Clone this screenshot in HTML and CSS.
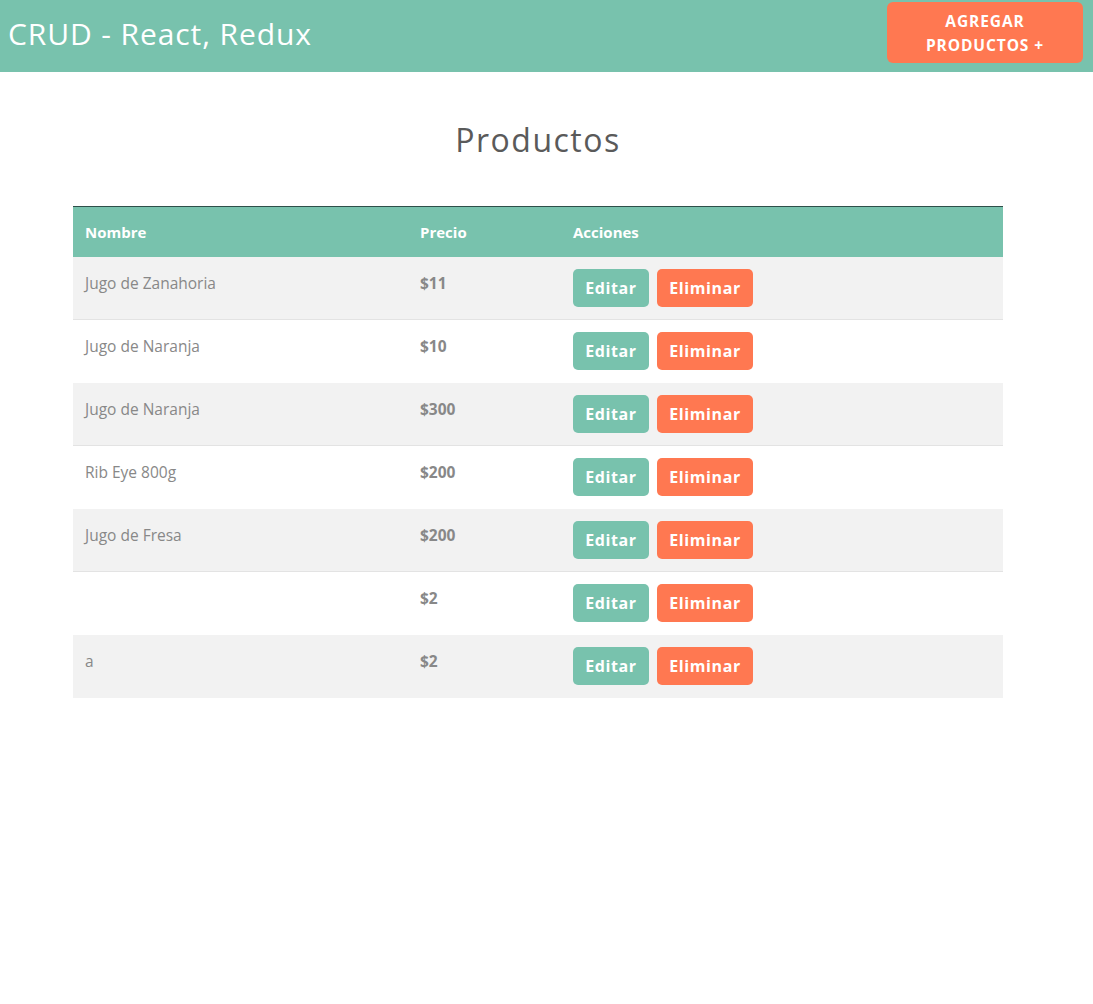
FILE: index.html
```html
<!DOCTYPE html>
<html lang="es">
<head>
<meta charset="utf-8">
<title>CRUD - React, Redux</title>
<link rel="stylesheet" href="styles.css">
</head>
<body>
<nav class="navbar">
  <h1 class="brand">CRUD - React, Redux</h1>
  <a class="btn-add" href="#">Agregar<br>Productos +</a>
</nav>
<main class="main">
  <div class="container">
    <h2 class="title">Productos</h2>
    <table class="table">
      <thead>
        <tr>
          <th class="c-name">Nombre</th>
          <th class="c-price">Precio</th>
          <th class="c-actions">Acciones</th>
        </tr>
      </thead>
      <tbody>
        <tr><td>Jugo de Zanahoria</td><td class="price">$11</td><td class="actions"><button class="btn edit">Editar</button><button class="btn del">Eliminar</button></td></tr>
        <tr><td>Jugo de Naranja</td><td class="price">$10</td><td class="actions"><button class="btn edit">Editar</button><button class="btn del">Eliminar</button></td></tr>
        <tr><td>Jugo de Naranja</td><td class="price">$300</td><td class="actions"><button class="btn edit">Editar</button><button class="btn del">Eliminar</button></td></tr>
        <tr><td>Rib Eye 800g</td><td class="price">$200</td><td class="actions"><button class="btn edit">Editar</button><button class="btn del">Eliminar</button></td></tr>
        <tr><td>Jugo de Fresa</td><td class="price">$200</td><td class="actions"><button class="btn edit">Editar</button><button class="btn del">Eliminar</button></td></tr>
        <tr><td></td><td class="price">$2</td><td class="actions"><button class="btn edit">Editar</button><button class="btn del">Eliminar</button></td></tr>
        <tr><td>a</td><td class="price">$2</td><td class="actions"><button class="btn edit">Editar</button><button class="btn del">Eliminar</button></td></tr>
      </tbody>
    </table>
  </div>
</main>
</body>
</html>
```

FILE: styles.css
```css
* { box-sizing: border-box; }
html, body { margin: 0; padding: 0; background: #fff; }
body {
  font-family: "Open Sans", "Noto Sans", sans-serif;
  font-size: 15.5px;
  color: #888;
}
.navbar {
  height: 72px;
  background: #78c2ad;
  display: flex;
  align-items: flex-start;
  justify-content: space-between;
  padding: 0 10px 0 8px;
}
.brand {
  margin: 0;
  font-family: "Open Sans", sans-serif;
  font-weight: 400;
  font-size: 30px;
  line-height: 36px;
  color: #fff;
  padding-top: 16px;
  letter-spacing: 0.9px;
}
.btn-add {
  margin-top: 2px;
  width: 196px;
  height: 61px;
  background: #ff7851;
  border-radius: 6px;
  color: #fff;
  text-decoration: none;
  text-transform: uppercase;
  font-family: "Open Sans", sans-serif;
  font-weight: 700;
  font-size: 15.5px;
  letter-spacing: 0.9px;
  line-height: 24px;
  text-align: center;
  padding-top: 7px;
}
.main { width: 1076px; }
.container {
  width: 930px;
  margin: 0 auto;
}
.title {
  margin: 0;
  padding-top: 46px;
  height: 134px;
  text-align: center;
  font-family: "Open Sans", sans-serif;
  font-weight: 400;
  font-size: 32px;
  line-height: 44px;
  letter-spacing: 1.5px;
  color: #5a5a5a;
}
.table {
  width: 930px;
  border-collapse: collapse;
  border-top: 1px solid #2f4f4a;
}
.table th {
  background: #78c2ad;
  color: #fff;
  font-weight: 700;
  font-size: 15px;
  text-align: left;
  height: 50px;
  padding: 0 12px;
  vertical-align: middle;
}
.c-name { width: 335px; }
.c-price { width: 153px; }
.table td {
  height: 63px;
  padding: 15px 12px 0;
  vertical-align: top;
  line-height: 22px;
}
.table tbody tr:nth-child(odd) td { background: #f2f2f2; }
.table tbody tr:nth-child(even) td { border-top: 1px solid #e3e3e3; }
.price { font-weight: 700; }
.table td.actions { padding-top: 12px; }
.btn {
  border: none;
  border-radius: 5px;
  height: 38px;
  padding: 0;
  color: #fff;
  font-family: "Open Sans", sans-serif;
  font-weight: 700;
  font-size: 16px;
  letter-spacing: 0.6px;
  cursor: pointer;
  margin-right: 8px;
}
.edit { background: #78c2ad; width: 76px; }
.del { background: #ff7851; width: 96px; }
```
